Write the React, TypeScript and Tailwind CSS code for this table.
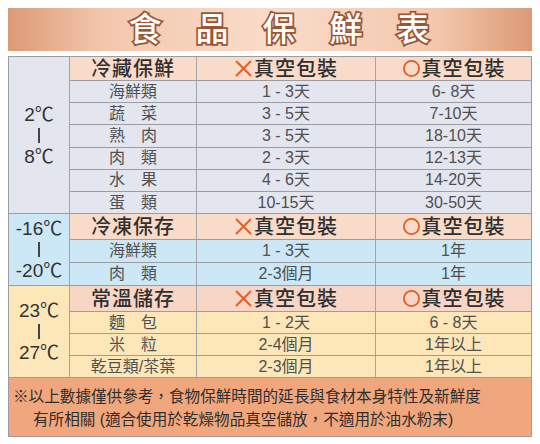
import type { ReactNode } from "react";

type Row = [string, string, string];

interface Section {
  temp: [string, string];
  title: string;
  rows: Row[];
  body: string;
  head: string;
  headH: string;
  rowH: string;
}

const sections: Section[] = [
  {
    temp: ["2℃", "8℃"],
    title: "冷藏保鮮",
    body: "bg-[#e3e5ef]",
    head: "bg-[#f9dbc9]",
    headH: "h-[23px]",
    rowH: "h-[22.2px]",
    rows: [
      ["海鮮類", "1 - 3天", "6- 8天"],
      ["蔬　菜", "3 - 5天", "7-10天"],
      ["熟　肉", "3 - 5天", "18-10天"],
      ["肉　類", "2 - 3天", "12-13天"],
      ["水　果", "4 - 6天", "14-20天"],
      ["蛋　類", "10-15天", "30-50天"],
    ],
  },
  {
    temp: ["-16℃", "-20℃"],
    title: "冷凍保存",
    body: "bg-[#cce7f6]",
    head: "bg-[#f9dbc9]",
    headH: "h-[25px]",
    rowH: "h-[23px]",
    rows: [
      ["海鮮類", "1 - 3天", "1年"],
      ["肉　類", "2-3個月", "1年"],
    ],
  },
  {
    temp: ["23℃", "27℃"],
    title: "常溫儲存",
    body: "bg-[#fde7b9]",
    head: "bg-[#f8d6c6]",
    headH: "h-[25px]",
    rowH: "h-[22px]",
    rows: [
      ["麵　包", "1 - 2天", "6 - 8天"],
      ["米　粒", "2-4個月", "1年以上"],
      ["乾豆類/茶葉", "2-3個月", "1年以上"],
    ],
  },
];

function Cell({ children, className = "" }: { children: ReactNode; className?: string }) {
  return (
    <div className={`flex items-center justify-center border-l border-[#a4a4a8] ${className}`}>
      {children}
    </div>
  );
}

function CrossMark() {
  return (
    <svg width="19" height="19" viewBox="0 0 19 19" className="mr-[1px]">
      <path d="M2.5 2.5 L16.5 16.5 M16.5 2.5 L2.5 16.5" stroke="#e25c25" strokeWidth="1.8" strokeLinecap="round" />
    </svg>
  );
}

function CircleMark() {
  return (
    <svg width="19" height="19" viewBox="0 0 19 19" className="mr-[1px]">
      <circle cx="9.5" cy="9.5" r="7.6" fill="none" stroke="#e25c25" strokeWidth="1.8" />
    </svg>
  );
}

function TableSection({ s }: { s: Section }) {
  const headCls = `${s.head} ${s.headH} text-[20px] font-medium leading-none tracking-[1px] text-[#2f2f2f]`;
  const rowCls = `${s.rowH} border-t border-t-[#9c9ca2] text-[16px] leading-none text-[#505050]`;
  return (
    <div className={`flex border-t border-[#9c9ca2] ${s.body}`}>
      <div className="flex w-[60px] shrink-0 flex-col items-center justify-center gap-[4px] text-[19px] leading-[19px] text-[#333]">
        <span>{s.temp[0]}</span>
        <div className="h-[15px] w-[2px] bg-[#444]" />
        <span>{s.temp[1]}</span>
      </div>
      <div className="grid flex-1 grid-cols-[127px_179px_1fr]">
        <Cell className={headCls}>{s.title}</Cell>
        <Cell className={headCls}>
          <CrossMark />
          真空包裝
        </Cell>
        <Cell className={headCls}>
          <CircleMark />
          真空包裝
        </Cell>
        {s.rows.map((r) => (
          <div key={r[0]} className="contents">
            <Cell className={rowCls}>{r[0]}</Cell>
            <Cell className={rowCls}>{r[1]}</Cell>
            <Cell className={rowCls}>{r[2]}</Cell>
          </div>
        ))}
      </div>
    </div>
  );
}

export default function App() {
  return (
    <div
      className="h-[444px] w-[540px] bg-white px-[8px] pt-[8px]"
      style={{ fontFamily: '"Liberation Sans", "Noto Sans CJK TC", sans-serif' }}
    >
      <div className="flex h-[43px] items-center justify-center bg-[linear-gradient(90deg,#dc9a76_0%,#f3c7ad_18%,#f9dcc9_50%,#f3c7ad_82%,#dc9a76_100%)]">
        <span className="pl-[52px] text-[33px] font-medium leading-none tracking-[34px] text-white [-webkit-text-stroke:3.5px_#9b5533] [paint-order:stroke_fill]">
          食品保鮮表
        </span>
      </div>
      <div className="mt-[5px] border-x border-b border-[#9c9ca2]">
        {sections.map((s) => (
          <TableSection key={s.title} s={s} />
        ))}
        <div className="h-[59px] border-t border-[#9c9ca2] bg-[#f1a77d] pl-[4px] pt-[7px] text-[15.6px] leading-[23px] text-[#2e2e2e]">
          <div>※以上數據僅供參考，食物保鮮時間的延長與食材本身特性及新鮮度</div>
          <div className="pl-[20px]">有所相關 (適合使用於乾燥物品真空儲放，不適用於油水粉末)</div>
        </div>
      </div>
    </div>
  );
}
